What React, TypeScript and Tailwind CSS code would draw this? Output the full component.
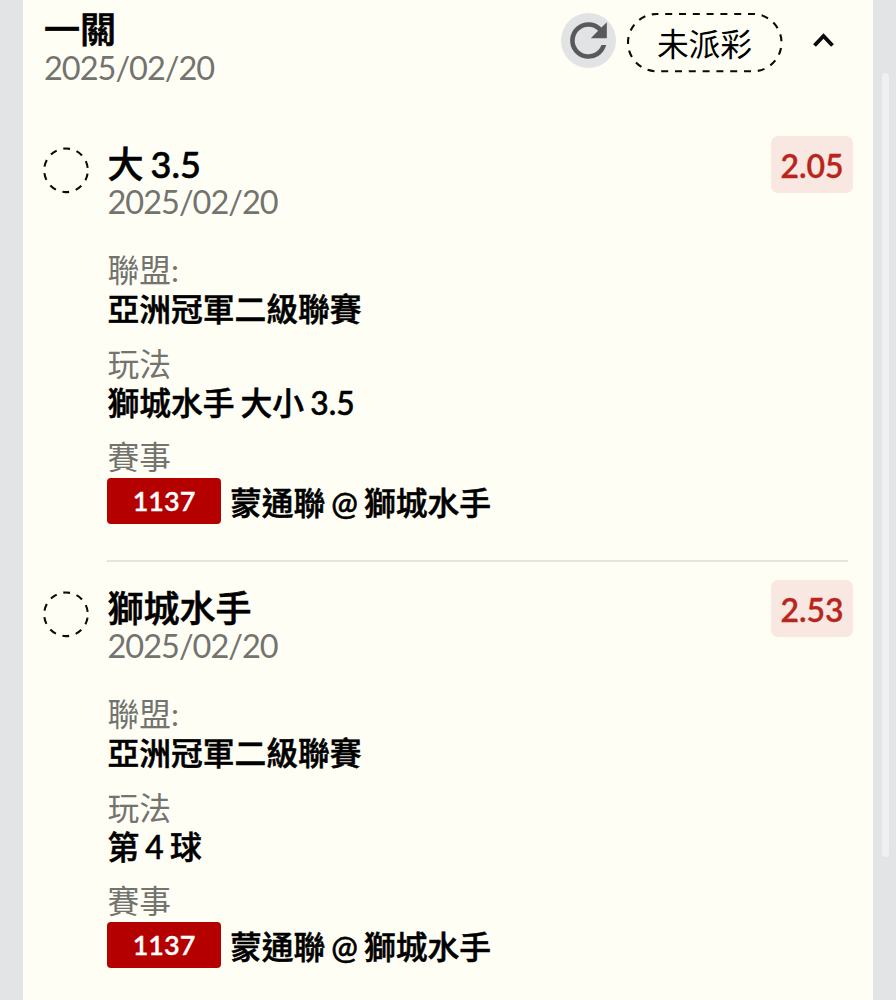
import React from "react";

type Bet = { title: string; odds: string; play: string };

const bets: Bet[] = [
  { title: "大 3.5", odds: "2.05", play: "獅城水手 大小 3.5" },
  { title: "獅城水手", odds: "2.53", play: "第 4 球" },
];

function DateLine() {
  return (
    <div className="h-[38px] text-[32.5px] leading-[37px] tracking-[-1px] whitespace-nowrap text-[#73736f]">2025/02/20</div>
  );
}

function Field({ label, children }: { label: string; children: React.ReactNode }) {
  return (
    <div className="text-[31.75px] leading-[39px]">
      <div className="h-[39px] text-[#73736f]">{label}</div>
      <div className="h-[39px] font-medium whitespace-nowrap [word-spacing:-1.9px] [-webkit-text-stroke:0.55px_#000]">{children}</div>
    </div>
  );
}

function BetItem({ bet, last }: { bet: Bet; last: boolean }) {
  return (
    <section className="flex h-[444px] pr-[20px] pl-[20px]">
      <svg className="mt-[29px] h-[48px] w-[48px] shrink-0" viewBox="0 0 48 48" fill="none">
        <circle cx="23" cy="23.3" r="21.8" stroke="#0a0a0a" strokeWidth="2.1" strokeDasharray="6.9 6.797" strokeDashoffset="-3.4" />
      </svg>
      <div className="ml-[16px] flex flex-1 flex-col">
        <div className="flex justify-between">
          <div className="pt-[27px] pl-[0.5px]">
            <div className="h-[38px] text-[36px] leading-[38px] font-medium whitespace-nowrap [word-spacing:-2px] [-webkit-text-stroke:0.6px_#000]">{bet.title}</div>
            <DateLine />
          </div>
          <div className="mt-[18px] flex h-[57px] w-[82px] items-center justify-center rounded-[7px] bg-[#f9e7e1] pt-[2px] text-[32px] font-semibold text-[#b8251c] [-webkit-text-stroke:0.3px_#b8251c]">{bet.odds}</div>
        </div>
        <div className="mt-[30px] flex flex-col gap-[15.5px] pl-[0.5px]">
          <Field label="聯盟:">亞洲冠軍二級聯賽</Field>
          <Field label="玩法">{bet.play}</Field>
          <Field label="賽事">
            <div className="-ml-[0.5px] flex h-[47px] items-center pt-[1px]">
              <div className="flex h-[46px] w-[114px] shrink-0 items-center justify-center rounded-[4px] bg-[#b50000] pb-[1px] text-[27px] font-semibold text-white [-webkit-text-stroke:0.3px_#fff]">1137</div>
              <div className="ml-[9px] pt-[4px]">蒙通聯 @ 獅城水手</div>
            </div>
          </Field>
        </div>
        {!last && <div className="mt-[44px] mr-[5px] h-[2px] shrink-0 bg-[#e6e4df]" />}
      </div>
    </section>
  );
}

export default function App() {
  return (
    <div className="flex h-[1000px] w-[896px] overflow-hidden bg-[#e3e4e6] font-['Lato','Noto_Sans_CJK_TC',sans-serif] text-black">
      <main className="ml-[23px] w-[850px] shrink-0 bg-[#fffef5]">
        <header className="flex h-[118px] justify-between pr-[38px] pl-[21px]">
          <div className="pt-[11px]">
            <div className="h-[38px] text-[36px] leading-[37px] font-medium [-webkit-text-stroke:0.7px_#000]">一關</div>
            <DateLine />
          </div>
          <div className="flex items-start">
            <div className="mt-[13px] flex h-[55px] w-[55px] items-center justify-center rounded-full bg-[#e1e3e5]">
              <svg className="h-[55px] w-[55px]" viewBox="0 0 24 24" fill="#58595b">
                <path d="M17.65 6.35A7.96 7.96 0 0 0 12 4a8 8 0 1 0 7.73 10h-2.08A6 6 0 1 1 12 6c1.66 0 3.14.69 4.22 1.78L13 11h7V4z" />
              </svg>
            </div>
            <div className="relative mt-[12px] ml-[11px] flex h-[61px] w-[156px] items-center justify-center pt-[5px] pr-[1px] text-[31.75px]">
              <svg className="absolute inset-0" width="156" height="61" fill="none">
                <rect x="1" y="2" width="153.5" height="57.3" rx="28.6" stroke="#0a0a0a" strokeWidth="2.1" strokeDasharray="7 6.8" strokeDashoffset="5.2" />
              </svg>
              未派彩
            </div>
            <svg className="mt-[32px] ml-[28px]" width="24" height="17" viewBox="0 0 24 17" fill="none" stroke="#0a0a0a" strokeWidth="3.9">
              <path d="M3.5 13.5 12.5 4 21.5 13.5" />
            </svg>
          </div>
        </header>
        {bets.map((b, i) => (
          <BetItem key={b.title} bet={b} last={i === bets.length - 1} />
        ))}
      </main>
      <aside className="flex flex-1 pt-[73px] pl-[9px]">
        <div className="h-[784px] w-[7px] rounded-full bg-[#eff0f2]" />
      </aside>
    </div>
  );
}
